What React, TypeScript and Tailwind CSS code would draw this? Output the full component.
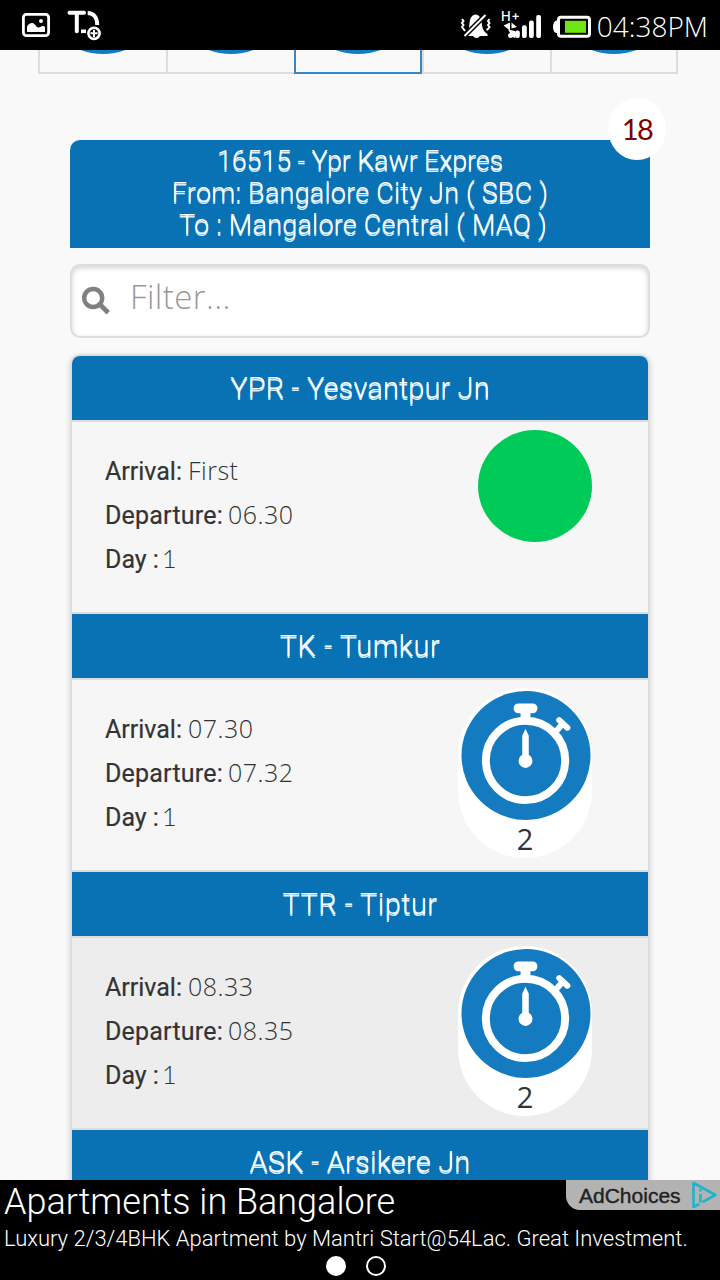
type Stop = {
  title: string;
  titleClass: string;
  arrival: string;
  departure: string;
  day: string;
  halt?: string;
  rowClass: string;
};

const stops: Stop[] = [
  { title: "YPR - Yesvantpur Jn", titleClass: "tracking-[0.1px]", arrival: "First", departure: "06.30", day: "1", rowClass: "bg-[#f6f6f6]" },
  { title: "TK - Tumkur", titleClass: "tracking-[0.5px]", arrival: "07.30", departure: "07.32", day: "1", halt: "2", rowClass: "bg-[#f6f6f6]" },
  { title: "TTR - Tiptur", titleClass: "tracking-[0.4px]", arrival: "08.33", departure: "08.35", day: "1", halt: "2", rowClass: "bg-[#ededed]" },
  { title: "ASK - Arsikere Jn", titleClass: "tracking-[0.2px]", arrival: "", departure: "", day: "", rowClass: "bg-[#f6f6f6]" },
];

function StatusBar() {
  return (
    <header className="flex h-[50px] shrink-0 items-center bg-black pl-[22px] pr-3 text-white">
      <svg width="28" height="50" viewBox="22 0 28 50" fill="none">
        <rect x="23.4" y="14.4" width="25.2" height="21.2" rx="3" stroke="#fff" strokeWidth="2.8" />
        <circle cx="41" cy="21" r="2" fill="#fff" />
        <path d="M27 32v-5.500c1.500-2.500 4-4 6.200-3.200 2.300.8 3 4.200 5.200 4.200 2 0 2.500-1.500 4.500-1.500 1 0 2 .5 2.100 1.500V32z" fill="#fff" />
      </svg>
      <svg className="ml-[17px]" width="35" height="50" viewBox="67 0 35 50" fill="none" stroke="#fff">
        <path d="M69.500 12.700h14.500M76.800 13v18.300" strokeWidth="4" strokeLinecap="round" />
        <path d="M87.700 13c5.500 0 9.500 4 9.500 12" strokeWidth="4" />
        <path d="M81 31.300h5" strokeWidth="3.600" />
        <circle cx="94" cy="33.300" r="5.600" strokeWidth="2.600" />
        <path d="M90.400 33.300h7.200M94 29.700v7.200" strokeWidth="2" />
      </svg>
      <div className="flex-1" />
      <svg width="31" height="50" viewBox="460 0 31 50" fill="none">
        <path d="M465.500 34c3.500-2.500 3.500-6 4-11 .4-4.600 2.500-8.600 6-8.600 3.600 0 5.800 4 6.300 8.600.4 5 1.600 8.500 5.700 11v2h-7.500a4 4 0 0 1-7 0h-7.500z" fill="#fff" />
        <path d="M464 36.500L487 13.500" stroke="#000" strokeWidth="5" />
        <path d="M464.500 36L485.500 15" stroke="#fff" strokeWidth="2" />
        <path d="M462 19l1.500 2-1.500 2 1.500 2-1.500 2 1.500 2 1.500 2M489.500 19l-1.500 2 1.500 2-1.500 2 1.500 2-1.500 2-1.500 1" stroke="#fff" strokeWidth="2" />
      </svg>
      <svg className="ml-[10px]" width="41" height="50" viewBox="501 0 41 50" fill="#fff">
        <text x="501" y="20.500" fontFamily="Inter, sans-serif" fontSize="13" fontWeight="500" textLength="19">H+</text>
        <path d="M510 22.500v8l-6.500-5zM511.500 22.500l5.500 4.500-5.500 1.500z" />
        <circle cx="510.500" cy="35.500" r="2.500" />
        <path d="M508 29.500l7 1.500v7l-2.500-1z" />
        <rect x="515" y="30.500" width="4.800" height="7.500" rx="2" />
        <rect x="522" y="25.200" width="4.800" height="12.800" rx="2" />
        <rect x="529" y="20.500" width="4.800" height="17.500" rx="2" />
        <rect x="536.200" y="15" width="4.800" height="23" rx="2" />
      </svg>
      <svg className="ml-[11px]" width="38" height="50" viewBox="553 0 38 50" fill="none">
        <rect x="558.500" y="17.300" width="31" height="19" rx="2.500" stroke="#fff" strokeWidth="3" />
        <path d="M558 20.500h-1.500q-3.500 1-3.500 6.500t3.500 6h1.500z" fill="#fff" />
        <rect x="565" y="20.800" width="21" height="12" fill="#6ee614" />
      </svg>
      <span className="ml-[6px] mt-[2px] whitespace-nowrap font-['Open_Sans',sans-serif] text-[28px] font-light leading-[50px]">04:38PM</span>
    </header>
  );
}

const tabClasses = [
  "border-l-2 border-[#dddddd]",
  "border-l-2 border-[#dddddd]",
  "border-x-2 border-[#3687ca]",
  "border-l-2 border-[#dddddd]",
  "border-x-2 border-[#dddddd]",
];

function TabStrip() {
  return (
    <nav className="ml-[38px] flex h-6 w-[640px] shrink-0">
      {tabClasses.map((tabClass, i) => (
        <div key={i} className={`flex w-32 items-start justify-center border-b-2 ${tabClass}`}>
          <svg width="60" height="5" viewBox="-30 0 60 5">
            <circle cx="0" cy="-61" r="65" fill="#147bc0" />
          </svg>
        </div>
      ))}
    </nav>
  );
}

function Stopwatch() {
  return (
    <svg width="130" height="130" viewBox="0 0 130 130" fill="none" className="ml-px block">
      <circle cx="65" cy="65" r="65" fill="#147bc0" />
      <circle cx="64.500" cy="70" r="40" stroke="#fff" strokeWidth="8" />
      <rect x="52.500" y="12.500" width="24" height="10" rx="4.800" fill="#fff" />
      <path d="M59.500 20h10v9h-10z" fill="#fff" />
      <path d="M94.500 41.500l7-8" stroke="#fff" strokeWidth="6" />
      <path d="M98.500 29.300l8.200 7.700" stroke="#fff" strokeWidth="6" strokeLinecap="round" />
      <path d="M61.200 66V45l3.300-7 3.300 7v21z" fill="#fff" />
      <circle cx="64.500" cy="70.500" r="7" fill="#fff" />
    </svg>
  );
}

function Detail({ label, labelClass, value }: { label: string; labelClass: string; value: string }) {
  return (
    <p className="h-11 whitespace-nowrap text-[25px] leading-[44px] text-[#333333]">
      <span className={`inline-block font-['Roboto',sans-serif] [-webkit-text-stroke:0.2px_#333333] ${labelClass}`}>{label}</span>
      <span
        className={
          value === "1"
            ? "font-['Lato',sans-serif] font-light"
            : "font-['Open_Sans',sans-serif] font-light tracking-[0.5px]"
        }
      >
        {value}
      </span>
    </p>
  );
}

function StopCard({ stop }: { stop: Stop }) {
  return (
    <li>
      <h2
        className={`h-[66px] border-b-2 border-[#dddddd] bg-[#0872b5] text-center font-['Roboto',sans-serif] text-[29px] font-light leading-[64px] text-white [text-shadow:0_2px_0_#d5eefb] ${stop.titleClass}`}
      >
        {stop.title}
      </h2>
      <div className={`flex h-48 justify-between border-b-2 border-[#dddddd] pl-[33px] pr-14 ${stop.rowClass}`}>
        <div className="pt-[26px]">
          <Detail label="Arrival:" labelClass="w-[83px]" value={stop.arrival} />
          <Detail label="Departure:" labelClass="w-[123px] tracking-[0.2px]" value={stop.departure} />
          <Detail label="Day :" labelClass="w-[57px]" value={stop.day} />
        </div>
        {stop.halt ? (
          <div className="mt-2 flex h-[170px] w-[134px] flex-col items-center rounded-[67px] bg-white pt-[3px]">
            <Stopwatch />
            <span className="font-['Open_Sans',sans-serif] text-[29px] leading-[38px] text-[#333333]">{stop.halt}</span>
          </div>
        ) : (
          <div className="mt-2 h-28 w-[114px] rounded-[50%] bg-[#00cb58]" />
        )}
      </div>
    </li>
  );
}

function AdBanner() {
  return (
    <footer className="relative flex h-[100px] shrink-0 flex-col bg-black pl-1 font-['Roboto',sans-serif] font-light text-white">
      <p className="whitespace-nowrap pt-px text-[36px] leading-[42px]">Apartments in Bangalore</p>
      <p className="whitespace-nowrap text-[22px] leading-[32px]">
        Luxury 2/3/4BHK Apartment by Mantri Start@54Lac. Great Investment.
      </p>
      <div className="flex gap-5 pl-[322px] pt-px">
        <span className="size-5 rounded-full bg-white" />
        <span className="size-5 rounded-full border-2 border-white" />
      </div>
      <div className="absolute right-0 top-0 flex h-[30px] w-[154px] items-center rounded-bl-[14px] bg-[#b3b3b3] pl-[13px]">
        <span className="pt-0.5 font-['Liberation_Sans',sans-serif] text-[21px] font-normal leading-[28px] text-[#222222] [-webkit-text-stroke:0.4px_#222222]">AdChoices</span>
        <svg className="ml-[9px]" width="28" height="30" viewBox="690 0 28 30" fill="none" stroke="#1fb4cc" strokeWidth="2.600">
          <path d="M693.500 27V3L715.500 15 703.500 21.500M693.500 27l5-2.500" strokeLinejoin="round" strokeLinecap="round" />
          <path d="M700.500 14v8.500M700.500 9v2.500" />
        </svg>
      </div>
    </footer>
  );
}

export default function App() {
  return (
    <div className="flex h-[1280px] w-[720px] flex-col overflow-hidden bg-[#f9f9f9]">
      <StatusBar />
      <TabStrip />
      <main className="min-h-0 flex-1 overflow-hidden px-[70px] pt-[66px]">
        <section className="relative h-[108px] rounded-tl-[10px] bg-[#0872b5] pt-[5px] text-center font-['Roboto',sans-serif] text-[27px] font-light leading-8 text-white [text-shadow:0_2px_0_#d5eefb]">
          <p className="tracking-[-0.15px]">16515 - Ypr Kawr Expres</p>
          <p className="tracking-[0.22px]">From: Bangalore City Jn ( SBC )</p>
          <p className="pl-1.5 tracking-[0.22px]">To : Mangalore Central ( MAQ )</p>
          <span className="absolute -right-4 -top-[42px] h-[62px] w-[58px] rounded-[50%] bg-white text-center font-['Lato',sans-serif] text-[29px] font-normal leading-[62px] tracking-[-1.5px] text-[#800000] [text-shadow:none]">
            18
          </span>
        </section>
        <div className="mt-4 flex h-[74px] items-center rounded-[10px] border-2 border-[#dddddd] bg-white pl-[9px] shadow-[inset_0_2px_5px_rgba(0,0,0,0.18)]">
          <svg width="30" height="30" viewBox="0 0 30 30" fill="none" stroke="#808080">
            <circle cx="12.200" cy="12" r="9" strokeWidth="4.400" />
            <path d="M19 18.500l6.500 6.500" strokeWidth="4.800" strokeLinecap="square" />
          </svg>
          <span className="-mt-2 ml-[19px] font-['Open_Sans',sans-serif] text-[33px] font-light leading-10 tracking-[0.4px] text-[#999999]">Filter...</span>
        </div>
        <ul className="mt-4 overflow-hidden rounded-t-[10px] border-x-2 border-t-2 border-[#dddddd] shadow-[0_2px_6px_rgba(0,0,0,0.15)]">
          {stops.map((stop) => (
            <StopCard key={stop.title} stop={stop} />
          ))}
        </ul>
      </main>
      <AdBanner />
    </div>
  );
}
